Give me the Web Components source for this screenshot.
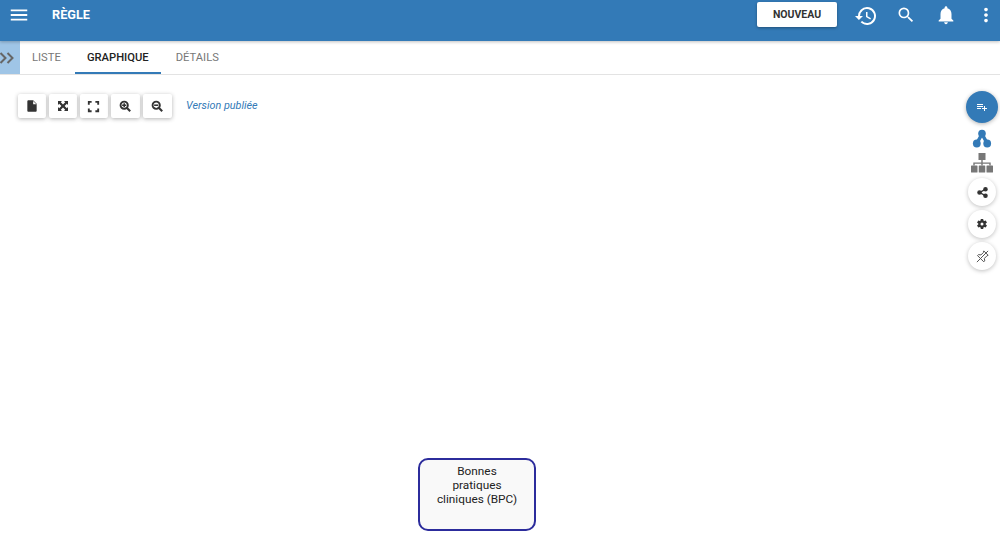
<!DOCTYPE html>
<html lang="fr"><head><meta charset="utf-8"><title>Règle</title>
<style>
html,body{margin:0;height:100%;background:#fff;overflow:hidden}
body{font-family:Roboto,"Liberation Sans",sans-serif;height:554px;display:flex;flex-direction:column}
</style></head><body>
<app-header title-text="RÈGLE"></app-header>
<app-tabs></app-tabs>
<graph-canvas>
  <graph-toolbar slot="toolbar"></graph-toolbar>
  <graph-rail slot="rail"></graph-rail>
  <graph-node slot="nodes" style="left:418px;top:383px">Bonnes pratiques cliniques (BPC)</graph-node>
</graph-canvas>
<script>
const P={
 menu:'M3 18h18v-2H3v2zm0-5h18v-2H3v2zm0-7v2h18V6H3z',
 history:'M13 3a9 9 0 0 0-9 9H1l3.89 3.89.07.14L9 12H6a7 7 0 1 1 2.05 4.95l-1.42 1.42A9 9 0 1 0 13 3zm-1 5v5l4.28 2.54.72-1.21-3.5-2.08V8H12z',
 search:'M15.5 14h-.79l-.28-.27A6.47 6.47 0 0 0 16 9.5 6.5 6.5 0 1 0 9.5 16c1.61 0 3.09-.59 4.23-1.57l.27.28v.79l5 4.99L20.49 19l-4.99-5zm-6 0C7.01 14 5 11.99 5 9.5S7.01 5 9.5 5 14 7.01 14 9.5 11.99 14 9.5 14z',
 bell:'M12 22c1.1 0 2-.9 2-2h-4c0 1.1.9 2 2 2zm6-6v-5c0-3.07-1.63-5.64-4.5-6.32V4c0-.83-.67-1.5-1.5-1.5s-1.5.67-1.5 1.5v.68C7.64 5.36 6 7.92 6 11v5l-2 2v1h16v-1l-2-2z',
 dots:'M12 8c1.1 0 2-.9 2-2s-.9-2-2-2-2 .9-2 2 .9 2 2 2zm0 2c-1.1 0-2 .9-2 2s.9 2 2 2 2-.9 2-2-.9-2-2-2zm0 6c-1.1 0-2 .9-2 2s.9 2 2 2 2-.9 2-2-.9-2-2-2z',
 file:'M14 2H6c-1.1 0-2 .9-2 2v16c0 1.1.9 2 2 2h12c1.1 0 2-.9 2-2V8l-6-6zm0 7V3.500L19.500 9H14z',
 fit:'M2 2h8L7.600 4.400 12 8.800 16.400 4.400 14 2h8v8l-2.400-2.400L15.200 12l4.400 4.400L22 14v8h-8l2.400-2.400L12 15.200l-4.400 4.400L10 22H2v-8l2.400 2.400L8.800 12 4.400 7.600 2 10V2z',
 full:'M3 9V3h6v3H6v3H3zm12-6h6v6h-3V6h-3V3zM3 15h3v3h3v3H3v-6zm15 0h3v6h-6v-3h3v-3z',
 addlist:'M14 10H2v2h12v-2zm0-4H2v2h12V6zm4 8v-4h-2v4h-4v2h4v4h2v-4h4v-2h-4zM2 16h8v-2H2v2z',
 gear:'M19.430 12.980c.04-.32.07-.64.07-.98s-.03-.66-.07-.98l2.110-1.650c.19-.15.24-.42.12-.64l-2-3.460c-.12-.22-.39-.3-.61-.22l-2.490 1c-.52-.4-1.080-.73-1.690-.98l-.38-2.650A.49.49 0 0 0 14 2h-4c-.25 0-.46.18-.49.42l-.38 2.650c-.61.25-1.170.59-1.690.98l-2.490-1c-.23-.09-.49 0-.61.22l-2 3.460c-.13.22-.07.49.12.64l2.110 1.650c-.04.32-.07.65-.07.98s.03.66.07.98l-2.110 1.650c-.19.15-.24.42-.12.64l2 3.460c.12.22.39.3.61.22l2.490-1c.52.4 1.080.73 1.690.98l.38 2.650c.03.24.24.42.49.42h4c.25 0 .46-.18.49-.42l.38-2.650c.61-.25 1.170-.59 1.690-.98l2.490 1c.23.09.49 0 .61-.22l2-3.460c.12-.22.07-.49-.12-.64l-2.110-1.650zM12 15a3 3 0 1 1 0-6 3 3 0 0 1 0 6z',
};
const ico=(n,s,c,st='')=>`<svg style="${st}" width="${s}" height="${s}" viewBox="0 0 24 24" fill="${c}" aria-hidden="true"><path fill-rule="evenodd" d="${P[n]}"/></svg>`;
const zoom=(plus)=>`<svg style="margin-right:1px" width="12.500" height="12.500" viewBox="0 0 24 24" fill="none" stroke="#333" aria-hidden="true"><circle cx="10" cy="10" r="7" stroke-width="3.600"/><path d="M15 15l6.500 6.500" stroke-width="4"/><path d="${plus?'M6 10h8M10 6v8':'M6 10h8'}" stroke-width="3"/></svg>`;
function def(name,html){customElements.define(name,class extends HTMLElement{constructor(){super();this.attachShadow({mode:'open'}).innerHTML=html}})}

def('app-header',`<style>
:host{display:flex;flex:none;height:41px;box-sizing:border-box;background:#337ab7;color:#fff;align-items:flex-start;box-shadow:0 1px 3px rgba(0,0,0,.25);position:relative;z-index:2}
.m{display:flex;margin:4px 0 0 8px;width:22px;height:22px}
h1{margin:7px 0 0 22px;font:700 12.700px/16px Roboto,sans-serif}
.sp{flex:1}
button{all:unset;box-sizing:border-box;width:80px;height:25px;margin-top:2px;background:#fff;color:#333;font:700 10.500px/25px Roboto,sans-serif;text-align:center;border-radius:2px;box-shadow:0 1px 3px rgba(0,0,0,.35)}
.i{display:flex}
.h{margin:4px 0 0 17px}.s{margin:5px 0 0 18px}.b{margin:4px 0 0 19px}.d{margin:4px 3px 0 18px}
</style><span class="m">${ico('menu',22,'#fff')}</span><h1>RÈGLE</h1><span class="sp"></span><button>NOUVEAU</button>
<span class="i h">${ico('history',24,'#fff')}</span><span class="i s">${ico('search',20,'#fff')}</span><span class="i b">${ico('bell',22,'#fff')}</span><span class="i d">${ico('dots',22,'#fff')}</span>`);

def('app-tabs',`<style>
:host{display:flex;flex:none;height:34px;box-sizing:border-box;border-bottom:1px solid #e3e3e3;background:#fff}
.t{display:flex;width:20px;background:#9fc5e6;align-items:center;justify-content:flex-start;height:33px}
nav{display:flex}
a{display:block;font:400 11.200px/33px Roboto,sans-serif;color:#777;padding:0 12px;height:33px;box-sizing:border-box;white-space:nowrap}
a.on{color:#222;border-bottom:2px solid #337ab7;font-weight:500;margin:0 3px 0 2px;width:86px;text-align:center;padding:0}
</style><span class="t"><svg width="15" height="14" viewBox="0 0 15 14" fill="none" stroke="#666" stroke-width="2"><path d="M0.500 2l5 5-5 5M7.500 2l5 5-5 5"/></svg></span>
<nav><a>LISTE</a><a class="on">GRAPHIQUE</a><a>DÉTAILS</a></nav>`);

def('graph-canvas',`<style>
:host{display:block;flex:1;position:relative;overflow:hidden;background:#fff}
</style><slot name="toolbar"></slot><slot name="rail"></slot><slot name="nodes"></slot>`);

def('graph-toolbar',`<style>
:host{display:flex;align-items:center;padding:19px 0 0 18px;gap:3px}
b{display:flex;align-items:center;justify-content:center;height:24px;width:28px;background:#fff;border-radius:2px;box-shadow:0 1px 4px rgba(0,0,0,.3)}
b.w{width:29px}
em{margin-left:11px;font:italic 400 10.800px/16px Roboto,sans-serif;color:#337ab7}
</style><b>${ico('file',14,'#333')}</b><b>${ico('fit',12,'#333','margin-right:1px')}</b><b>${ico('full',15,'#333','margin-right:1px')}</b><b class="w">${zoom(1)}</b><b class="w">${zoom(0)}</b><em>Version publiée</em>`);

def('graph-rail',`<style>
:host{position:absolute;right:2px;top:16px;width:32px;display:flex;flex-direction:column;align-items:center}
.c{display:flex;align-items:center;justify-content:center;width:28px;height:28px;border-radius:50%;background:#fff;box-shadow:0 1px 4px rgba(0,0,0,.25);margin-top:4px}
.a{width:32px;height:32px;background:#337ab7;margin:0;box-shadow:0 1px 4px rgba(0,0,0,.3)}
svg{display:block;flex:none}
</style><span class="c a">${ico('addlist',12,'#fff')}</span>
<svg width="20" height="19" viewBox="0 0 20 19" style="margin-top:6px" fill="#337ab7"><circle cx="10" cy="4.500" r="3.800"/><circle cx="4.800" cy="14.500" r="3.900"/><circle cx="15.200" cy="14.500" r="3.900"/><path d="M10 5L5 14M10 5l5 9" stroke="#337ab7" stroke-width="3.500"/></svg>
<svg width="22" height="20" viewBox="0 0 22 20" style="margin-top:5px" fill="#777"><rect x="7.500" y="0" width="7" height="7"/><rect x="0" y="12.500" width="6.500" height="7" rx=".6"/><rect x="7.750" y="12.500" width="6.500" height="7" rx=".6"/><rect x="15.500" y="12.500" width="6.500" height="7" rx=".6"/><path d="M10.300 7h1.400v2.500h8V12.500h-1.400v-1.700h-6.600v1.700h-1.400v-1.700H3.700v1.700H2.300V9.500h8z"/></svg>
<span class="c" style="margin-top:5px"><svg width="11" height="11" viewBox="0 0 24 24" fill="#333" stroke="#333" stroke-width="3" aria-hidden="true"><circle cx="18.500" cy="5" r="3.500"/><circle cx="5.500" cy="12" r="3.500"/><circle cx="18.500" cy="19" r="3.500"/><path d="M18 5L6 12l12 7" fill="none"/></svg></span><span class="c">${ico('gear',12,'#333')}</span>
<span class="c"><svg width="15" height="15" viewBox="0 0 24 24" fill="none" stroke="#555" stroke-width="1.600" stroke-linejoin="round"><path d="M14 3l7 7-2 1-4 4 .5 4-1.500 1.500-10-10L5.500 9l4 .5 4-4z"/><path d="M9 15l-6 6M3.500 20.500L21 3"/></svg></span>`);

def('graph-node',`<style>
:host{position:absolute;box-sizing:border-box;width:118px;height:73px;border:2px solid #2c2c9c;border-radius:10px;background:#f9f9f9;color:#222;font:400 11.800px/14px Roboto,sans-serif;text-align:center;padding:4px 15px 4px 15px}
</style><slot></slot>`);
</script>
</body></html>
